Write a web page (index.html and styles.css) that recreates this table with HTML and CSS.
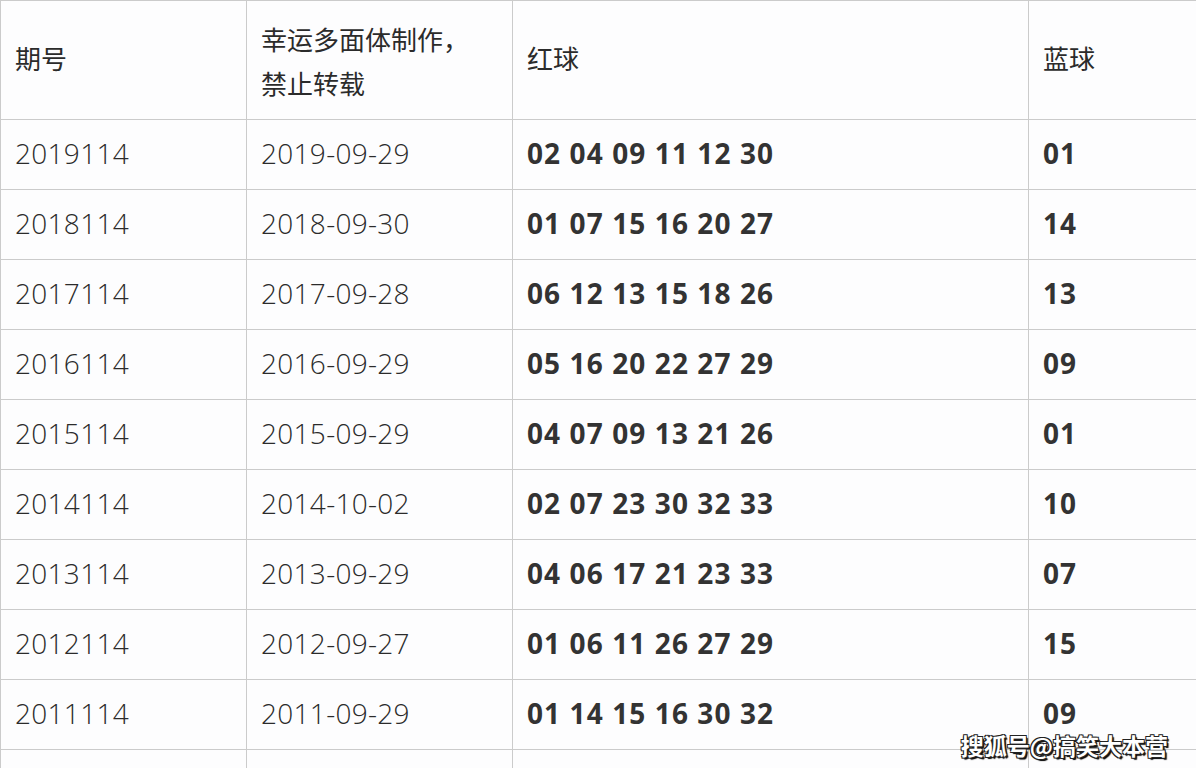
FILE: index.html
```html
<!DOCTYPE html>
<html lang="zh-CN">
<head>
<meta charset="utf-8">
<link rel="stylesheet" href="styles.css">
</head>
<body>
<div class="wrap">
<table class="draw">
<colgroup><col class="c1"><col class="c2"><col class="c3"><col class="c4"></colgroup>
<thead>
<tr><th>期号</th><th class="two">幸运多面体制作，<br>禁止转载</th><th>红球</th><th>蓝球</th></tr>
</thead>
<tbody>
<tr><td>2019114</td><td>2019-09-29</td><td class="b">02 04 09 11 12 30</td><td class="b">01</td></tr>
<tr><td>2018114</td><td>2018-09-30</td><td class="b">01 07 15 16 20 27</td><td class="b">14</td></tr>
<tr><td>2017114</td><td>2017-09-28</td><td class="b">06 12 13 15 18 26</td><td class="b">13</td></tr>
<tr><td>2016114</td><td>2016-09-29</td><td class="b">05 16 20 22 27 29</td><td class="b">09</td></tr>
<tr><td>2015114</td><td>2015-09-29</td><td class="b">04 07 09 13 21 26</td><td class="b">01</td></tr>
<tr><td>2014114</td><td>2014-10-02</td><td class="b">02 07 23 30 32 33</td><td class="b">10</td></tr>
<tr><td>2013114</td><td>2013-09-29</td><td class="b">04 06 17 21 23 33</td><td class="b">07</td></tr>
<tr><td>2012114</td><td>2012-09-27</td><td class="b">01 06 11 26 27 29</td><td class="b">15</td></tr>
<tr><td>2011114</td><td>2011-09-29</td><td class="b">01 14 15 16 30 32</td><td class="b">09</td></tr>
<tr><td></td><td></td><td></td><td></td></tr>
</tbody>
</table>
<div class="mark">搜狐号@搞笑大本营</div>
</div>
</body>
</html>
```
FILE: styles.css
```css
html, body {
  margin: 0;
  padding: 0;
  background: #fdfdfe;
  overflow: hidden;
}
.wrap {
  position: relative;
  width: 1196px;
  height: 768px;
  overflow: hidden;
}
.draw {
  border-collapse: collapse;
  table-layout: fixed;
  width: 1197px;
  font-family: "Open Sans", "Noto Sans CJK SC", sans-serif;
  color: #2b2b2b;
  font-size: 28px;
}
.c1 { width: 246px; }
.c2 { width: 266px; }
.c3 { width: 516px; }
.c4 { width: 169px; }
.draw th, .draw td {
  border: 1px solid #cbcbcb;
  padding: 0 0 0 14px;
  text-align: left;
  vertical-align: middle;
}
.draw th {
  font-weight: 400;
  height: 116px;
  font-size: 26px;
  line-height: 43px;
  padding-bottom: 2px;
  color: #2b2b2b;
}
.draw th.two {
  line-height: 44px;
  padding-top: 4px;
  padding-bottom: 0;
  height: 114px;
}
.draw td {
  height: 66px;
  padding-bottom: 3px;
  font-weight: 300;
  letter-spacing: 0.3px;
}
.draw td.b {
  font-weight: 700;
  letter-spacing: 1.1px;
  color: #333;
}
.mark {
  position: absolute;
  right: 28px;
  bottom: 10px;
  font-family: "Noto Sans CJK SC", sans-serif;
  font-weight: 700;
  font-size: 23px;
  line-height: 26px;
  color: #fff;
  text-shadow: 1px 1px 0 #222, -1px -1px 0 #222, 1px -1px 0 #222, -1px 1px 0 #222, 2px 2px 1px #000;
}
```
